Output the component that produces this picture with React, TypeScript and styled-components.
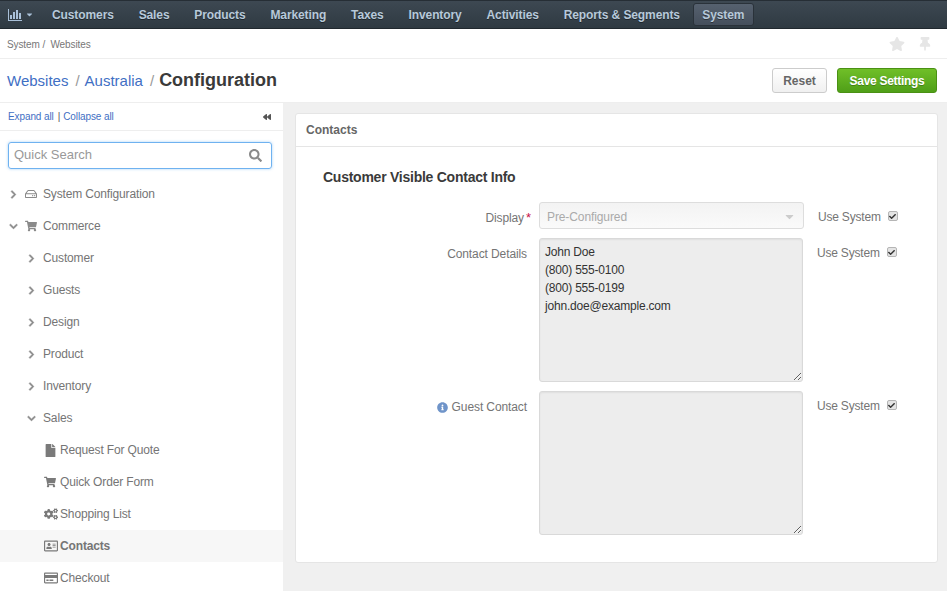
import styled, { createGlobalStyle } from 'styled-components'
import {
  FaBackward,
  FaCaretDown,
  FaCheck,
  FaChevronDown,
  FaChevronRight,
  FaCogs,
  FaFile,
  FaInfoCircle,
  FaRegAddressCard,
  FaRegCreditCard,
  FaRegHdd,
  FaSearch,
  FaShoppingCart,
  FaStar,
  FaThumbtack,
} from 'react-icons/fa'

const navItems = ['Customers', 'Sales', 'Products', 'Marketing', 'Taxes', 'Inventory', 'Activities', 'Reports & Segments']

const GlobalStyle = createGlobalStyle`
  html, body {
    margin: 0;
    padding: 0;
    height: 591px;
    overflow: hidden;
    background: #f0f0f0;
    font-family: "Liberation Sans", Arial, sans-serif;
    font-size: 12px;
    color: #6b6b6b;
  }
  * {
    box-sizing: border-box;
  }
`

const BarChartIcon = () => (
  <svg width='14' height='12' viewBox='0 0 14 12' fill='currentColor'>
    <path d='M0 0h1v11h13v1H0z' />
    <path d='M2 6h2v4H2zM5 3h2v7H5zM8 1h2v9H8zM11 4h2v6h-2z' />
  </svg>
)

const UseSystem = ({ offset }: { offset: number }) => (
  <StyledUseSystem $offset={offset}>
    Use System
    <StyledCheckbox>
      <FaCheck size={7} />
    </StyledCheckbox>
  </StyledUseSystem>
)

const App = () => {
  return (
    <>
      <GlobalStyle />
      <StyledPage>
        <StyledNavbar>
          <StyledDashboardMenu>
            <BarChartIcon />
            <FaCaretDown size={9} />
          </StyledDashboardMenu>
          {navItems.map(item => (
            <StyledNavItem key={item}>{item}</StyledNavItem>
          ))}
          <StyledNavActive>System</StyledNavActive>
        </StyledNavbar>

        <StyledBreadcrumbBar>
          <StyledCrumbs>System&nbsp;/&nbsp;&nbsp;Websites</StyledCrumbs>
          <StyledPinIcons>
            <FaStar size={16} />
            <FaThumbtack size={14} />
          </StyledPinIcons>
        </StyledBreadcrumbBar>

        <StyledTitleBar>
          <StyledTitle>
            <a>Websites</a>
            <StyledTitleSep>/</StyledTitleSep>
            <a>Australia</a>
            <StyledTitleSep>/</StyledTitleSep>
            <strong>Configuration</strong>
          </StyledTitle>
          <StyledActions>
            <StyledResetButton>Reset</StyledResetButton>
            <StyledSaveButton>Save Settings</StyledSaveButton>
          </StyledActions>
        </StyledTitleBar>

        <StyledBody>
          <StyledSidebar>
            <StyledSidebarTop>
              <div>
                <a>Expand all</a>
                <StyledPipe>|</StyledPipe>
                <a>Collapse all</a>
              </div>
              <FaBackward size={8} color='#555' />
            </StyledSidebarTop>

            <StyledSearch>
              <span>Quick Search</span>
              <FaSearch size={13} color='#8a8a8a' />
            </StyledSearch>

            <StyledTree>
              <StyledTreeRow $level={0}>
                <StyledToggle><FaChevronRight size={9} /></StyledToggle>
                <StyledRootIcon><FaRegHdd size={12} /></StyledRootIcon>
                System Configuration
              </StyledTreeRow>
              <StyledTreeRow $level={0}>
                <StyledToggle><FaChevronDown size={9} /></StyledToggle>
                <StyledRootIcon><FaShoppingCart size={12} /></StyledRootIcon>
                Commerce
              </StyledTreeRow>
              {['Customer', 'Guests', 'Design', 'Product', 'Inventory'].map(name => (
                <StyledTreeRow $level={1} key={name}>
                  <StyledToggle><FaChevronRight size={9} /></StyledToggle>
                  {name}
                </StyledTreeRow>
              ))}
              <StyledTreeRow $level={1}>
                <StyledToggle><FaChevronDown size={9} /></StyledToggle>
                Sales
              </StyledTreeRow>
              <StyledTreeRow $level={2}>
                <StyledLeafIcon><FaFile size={13} /></StyledLeafIcon>
                Request For Quote
              </StyledTreeRow>
              <StyledTreeRow $level={2}>
                <StyledLeafIcon><FaShoppingCart size={12} /></StyledLeafIcon>
                Quick Order Form
              </StyledTreeRow>
              <StyledTreeRow $level={2}>
                <StyledLeafIcon><FaCogs size={14} /></StyledLeafIcon>
                Shopping List
              </StyledTreeRow>
              <StyledTreeRow $level={2} $active>
                <StyledLeafIcon><FaRegAddressCard size={14} /></StyledLeafIcon>
                Contacts
              </StyledTreeRow>
              <StyledTreeRow $level={2}>
                <StyledLeafIcon><FaRegCreditCard size={14} /></StyledLeafIcon>
                Checkout
              </StyledTreeRow>
            </StyledTree>
          </StyledSidebar>

          <StyledContent>
            <StyledPanel>
              <StyledPanelHeader>Contacts</StyledPanelHeader>
              <StyledPanelBody>
                <StyledSectionTitle>Customer Visible Contact Info</StyledSectionTitle>

                <StyledFormRow>
                  <StyledLabel>
                    Display<StyledRequired>*</StyledRequired>
                  </StyledLabel>
                  <StyledSelect>
                    <span>Pre-Configured</span>
                    <FaCaretDown size={13} color='#ccc' />
                  </StyledSelect>
                  <UseSystem offset={14} />
                </StyledFormRow>

                <StyledFormRow>
                  <StyledLabel>Contact Details</StyledLabel>
                  <StyledTextarea disabled defaultValue={'John Doe\n(800) 555-0100\n(800) 555-0199\njohn.doe@example.com'} />
                  <UseSystem offset={14} />
                </StyledFormRow>

                <StyledFormRow>
                  <StyledLabel>
                    <FaInfoCircle size={11} color='#6f94c9' />
                    Guest Contact
                  </StyledLabel>
                  <StyledTextarea disabled defaultValue='' />
                  <UseSystem offset={14} />
                </StyledFormRow>
              </StyledPanelBody>
            </StyledPanel>
          </StyledContent>
        </StyledBody>
      </StyledPage>
    </>
  )
}

export default App

const StyledPage = styled.div`
  width: 947px;
  height: 591px;
  display: flex;
  flex-direction: column;
  overflow: hidden;
`

const StyledNavbar = styled.nav`
  height: 29px;
  flex: none;
  display: flex;
  align-items: center;
  padding: 0 0 0 8px;
  background: linear-gradient(#3d4852, #2f3a42);
  border-top: 1px solid #262e35;
  border-bottom: 1px solid #20282e;
  color: #b7c9da;
  font-weight: bold;
  letter-spacing: -0.1px;
  text-shadow: 0 1px 0 rgba(0, 0, 0, 0.4);
`

const StyledDashboardMenu = styled.div`
  width: 44px;
  display: flex;
  align-items: center;
  gap: 3px;
  color: #a9c0d8;
`

const StyledNavItem = styled.a`
  margin-right: 24.85px;
  white-space: nowrap;
`

const StyledNavActive = styled.a`
  width: 61px;
  height: 23px;
  margin-left: -12px;
  display: flex;
  align-items: center;
  justify-content: center;
  border: 1px solid #2a323a;
  border-radius: 3px;
  background: linear-gradient(#56616f, #454f5c);
`

const StyledBreadcrumbBar = styled.div`
  height: 30px;
  flex: none;
  padding: 0 15px 0 7px;
  display: flex;
  align-items: center;
  justify-content: space-between;
  background: #fff;
  border-bottom: 1px solid #eee;
  font-size: 10px;
  color: #777;
`

const StyledCrumbs = styled.span`
  margin-top: 1px;
  letter-spacing: -0.1px;
`

const StyledPinIcons = styled.div`
  display: flex;
  align-items: center;
  gap: 13px;
  color: #e6e6e6;
`

const StyledTitleBar = styled.div`
  height: 43px;
  flex: none;
  padding: 0 10px 0 7px;
  display: flex;
  align-items: center;
  justify-content: space-between;
  background: #fff;
`

const StyledTitle = styled.div`
  display: flex;
  align-items: baseline;
  font-size: 15px;
  color: #3f6fc4;

  strong {
    font-size: 18px;
    color: #3a3a3a;
  }
`

const StyledTitleSep = styled.span`
  margin: 0 5px 0 7px;
  color: #999;
`

const StyledActions = styled.div`
  display: flex;
  gap: 10px;
`

const StyledResetButton = styled.button`
  width: 55px;
  height: 25px;
  padding: 0;
  font: bold 12px "Liberation Sans", Arial, sans-serif;
  color: #666;
  border: 1px solid #ccc;
  border-radius: 3px;
  background: linear-gradient(#fff, #f0f0f0);
`

const StyledSaveButton = styled.button`
  width: 100px;
  height: 25px;
  padding: 0;
  font: bold 12px "Liberation Sans", Arial, sans-serif;
  letter-spacing: -0.3px;
  color: #fff;
  border: 1px solid #4a9114;
  border-radius: 3px;
  background: linear-gradient(#70bf28, #4f9f18);
  text-shadow: 0 1px 0 rgba(0, 0, 0, 0.25);
`

const StyledBody = styled.div`
  flex: 1;
  min-height: 0;
  display: flex;
  border-top: 1px solid #eee;
`

const StyledSidebar = styled.aside`
  width: 283px;
  flex: none;
  background: #fff;
  overflow: hidden;
`

const StyledSidebarTop = styled.div`
  height: 28px;
  padding: 0 12px 0 8px;
  display: flex;
  align-items: center;
  justify-content: space-between;
  border-bottom: 1px solid #eee;
  font-size: 10px;
  letter-spacing: -0.1px;
  color: #3f6fc4;
`

const StyledPipe = styled.span`
  margin: 0 3px 0 4px;
  color: #555;
`

const StyledSearch = styled.div`
  width: 264px;
  height: 27px;
  margin: 11px 0 9px 8px;
  padding: 0 9px 0 5px;
  display: flex;
  align-items: center;
  justify-content: space-between;
  border: 1px solid #6fb2f0;
  border-radius: 3px;
  box-shadow: 0 0 3px rgba(111, 178, 240, 0.6);
  font-size: 13px;
  color: #999;

  span {
    margin-top: -2px;
  }
`

const StyledTree = styled.div`
  display: flex;
  flex-direction: column;
`

const StyledTreeRow = styled.div<{ $level: number; $active?: boolean }>`
  height: 32px;
  flex: none;
  display: flex;
  align-items: center;
  padding-left: ${p => [9, 27, 44][p.$level]}px;
  background: ${p => (p.$active ? '#f7f7f7' : 'transparent')};
  font-weight: ${p => (p.$active ? 'bold' : 'normal')};
  letter-spacing: -0.15px;
  color: #757575;
`

const StyledToggle = styled.span`
  width: 16px;
  flex: none;
  display: flex;
  align-items: center;
  color: #8a8a8a;

  svg {
    stroke: currentColor;
    stroke-width: 30px;
  }
`

const StyledRootIcon = styled.span`
  width: 18px;
  flex: none;
  display: flex;
  align-items: center;
  color: #8a8a8a;
`

const StyledLeafIcon = styled.span`
  width: 16px;
  flex: none;
  display: flex;
  align-items: center;
  color: #7a7a7a;
`

const StyledContent = styled.main`
  flex: 1;
  min-width: 0;
  padding: 10px 9px 0 12px;
`

const StyledPanel = styled.section`
  height: 450px;
  background: #fff;
  border: 1px solid #e5e5e5;
  border-radius: 3px;
`

const StyledPanelHeader = styled.header`
  height: 33px;
  padding: 0 10px;
  display: flex;
  align-items: center;
  border-bottom: 1px solid #e5e5e5;
  font-weight: bold;
  color: #666;
`

const StyledPanelBody = styled.div`
  padding: 22px 0 0 27px;
  display: flex;
  flex-direction: column;
  gap: 9px;
`

const StyledSectionTitle = styled.h4`
  margin: 0 0 8px;
  font-size: 14px;
  line-height: 16px;
  letter-spacing: -0.25px;
  color: #3a3a3a;
`

const StyledFormRow = styled.div`
  display: flex;
  align-items: flex-start;
`

const StyledLabel = styled.label`
  width: 204px;
  padding-top: 9px;
  display: flex;
  align-items: center;
  justify-content: flex-end;
  gap: 4px;
  line-height: 14px;
  letter-spacing: -0.1px;
  color: #757575;
`

const StyledRequired = styled.span`
  margin: 0 -4px 0 -2px;
  color: #c8134a;
  font-size: 13px;
`

const StyledSelect = styled.div`
  width: 265px;
  height: 27px;
  margin-left: 12px;
  padding: 2px 7px 0 7px;
  display: flex;
  align-items: center;
  justify-content: space-between;
  border: 1px solid #ddd;
  border-radius: 3px;
  background: linear-gradient(#f3f3f3, #fafafa);
  letter-spacing: -0.1px;
  color: #aaa;
`

const StyledTextarea = styled.textarea`
  width: 264px;
  height: 144px;
  margin: 0 0 0 12px;
  padding: 4px 5px;
  display: block;
  border: 1px solid #d9d9d9;
  border-radius: 3px;
  background: #ededed;
  box-shadow: inset 0 1px 2px rgba(0, 0, 0, 0.06);
  font: 12px/18px "Liberation Sans", Arial, sans-serif;
  letter-spacing: -0.2px;
  color: #333;
  opacity: 1;
  outline: none;
`

const StyledUseSystem = styled.div<{ $offset: number }>`
  margin-left: ${p => p.$offset}px;
  padding-top: 8px;
  display: flex;
  align-items: center;
  gap: 7px;
  line-height: 14px;
  letter-spacing: -0.2px;
  color: #757575;
`

const StyledCheckbox = styled.span`
  width: 10px;
  height: 10px;
  margin-top: -2px;
  display: flex;
  align-items: center;
  justify-content: center;
  border: 1px solid #b5b5b5;
  border-radius: 2px;
  background: #e4e4e4;
  color: #333;
`
